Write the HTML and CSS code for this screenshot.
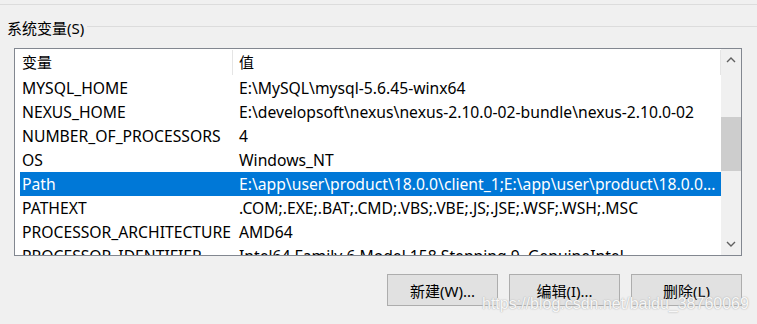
FILE: index.html
```html
<!DOCTYPE html>
<html lang="zh-CN">
<head>
  <meta charset="UTF-8">
  <meta name="viewport" content="width=device-width, initial-scale=1.0">
  <title>系统变量</title>
  <link rel="stylesheet" href="styles.css">
</head>
<body>
  <div class="top-rule"></div>

  <div class="group-title">
    <span class="group-label">系统变量(S)</span>
    <span class="group-line"></span>
  </div>

  <div class="listbox">
    <div class="list">
      <div class="list-header">
        <div class="col-name">变量</div>
        <div class="col-value">值</div>
        <div class="col-end"></div>
      </div>
      <div class="row">
        <div class="col-name">MYSQL_HOME</div>
        <div class="col-value">E:\MySQL\mysql-5.6.45-winx64</div>
      </div>
      <div class="row">
        <div class="col-name">NEXUS_HOME</div>
        <div class="col-value">E:\developsoft\nexus\nexus-2.10.0-02-bundle\nexus-2.10.0-02</div>
      </div>
      <div class="row">
        <div class="col-name">NUMBER_OF_PROCESSORS</div>
        <div class="col-value">4</div>
      </div>
      <div class="row">
        <div class="col-name">OS</div>
        <div class="col-value">Windows_NT</div>
      </div>
      <div class="row selected">
        <div class="col-name">Path</div>
        <div class="col-value">E:\app\user\product\18.0.0\client_1;E:\app\user\product\18.0.0...</div>
      </div>
      <div class="row">
        <div class="col-name">PATHEXT</div>
        <div class="col-value">.COM;.EXE;.BAT;.CMD;.VBS;.VBE;.JS;.JSE;.WSF;.WSH;.MSC</div>
      </div>
      <div class="row">
        <div class="col-name">PROCESSOR_ARCHITECTURE</div>
        <div class="col-value">AMD64</div>
      </div>
      <div class="row">
        <div class="col-name">PROCESSOR_IDENTIFIER</div>
        <div class="col-value">Intel64 Family 6 Model 158 Stepping 9, GenuineIntel</div>
      </div>
    </div>

    <div class="scrollbar">
      <div class="scroll-arrow">
        <svg width="10" height="6" viewBox="0 0 10 6"><path d="M1 5 L5 1 L9 5" fill="none" stroke="#606060" stroke-width="1.4"/></svg>
      </div>
      <div class="scroll-track">
        <div class="scroll-thumb"></div>
      </div>
      <div class="scroll-arrow">
        <svg width="10" height="6" viewBox="0 0 10 6"><path d="M1 1 L5 5 L9 1" fill="none" stroke="#606060" stroke-width="1.4"/></svg>
      </div>
    </div>
  </div>

  <div class="buttons">
    <button class="btn">新建(W)...</button>
    <button class="btn">编辑(I)...</button>
    <button class="btn">删除(L)</button>
  </div>

  <div class="watermark">https://blog.csdn.net/baidu_38760069</div>
</body>
</html>
```

FILE: styles.css
```css
* {
  box-sizing: border-box;
  margin: 0;
  padding: 0;
}

body {
  position: relative;
  width: 757px;
  height: 324px;
  overflow: hidden;
  background-color: #f0f0f0;
  font-family: "Noto Sans", "Noto Sans CJK SC", sans-serif;
  font-size: 15px;
  color: #000;
}

.top-rule {
  margin-top: 4px;
  height: 1px;
  background-color: #dcdcdc;
}

.group-title {
  display: flex;
  align-items: center;
  height: 30px;
  margin-top: 8px;
  padding-left: 7px;
}

.group-label {
  line-height: 20px;
}

.group-line {
  flex: 1;
  height: 1px;
  margin-left: 3px;
  margin-top: -4px;
  background-color: #dcdcdc;
}

.listbox {
  display: flex;
  width: 728px;
  height: 208px;
  margin-top: 5px;
  margin-left: 14px;
  border: 1px solid #828790;
  background-color: #fff;
}

.list {
  flex: 1;
  overflow: hidden;
  padding-left: 5px;
}

.list-header,
.row {
  display: flex;
  align-items: center;
  white-space: nowrap;
}

.list-header {
  height: 27px;
}

.row {
  height: 24px;
  font-size: 15.7px;
}

.col-name {
  width: 213px;
  flex-shrink: 0;
  padding-left: 2px;
}

.col-value {
  flex: 1;
  padding-left: 6px;
  overflow: hidden;
}

.list-header .col-name {
  height: 25px;
  line-height: 25px;
  border-right: 1px solid #e5e5e5;
}

.list-header .col-value {
  height: 25px;
  line-height: 25px;
}

.col-end {
  width: 1px;
  height: 25px;
  background-color: #e5e5e5;
}

.row.selected {
  background-color: #0078d7;
  color: #fff;
}

.scrollbar {
  display: flex;
  flex-direction: column;
  width: 20px;
  background-color: #f0f0f0;
}

.scroll-arrow {
  height: 22px;
  display: flex;
  justify-content: center;
  align-items: center;
}

.scroll-track {
  flex: 1;
  padding-top: 46px;
}

.scroll-thumb {
  height: 54px;
  background-color: #cdcdcd;
}

.buttons {
  display: flex;
  justify-content: flex-end;
  gap: 11px;
  margin-top: 18px;
  padding-right: 15px;
}

.btn {
  width: 111px;
  height: 32px;
  background-color: #e1e1e1;
  border: 1px solid #adadad;
  font-family: "Noto Sans", "Noto Sans CJK SC", sans-serif;
  font-size: 15px;
  color: #000;
}

.watermark {
  position: absolute;
  left: 482px;
  top: 295px;
  font-family: "Liberation Sans", Arial, sans-serif;
  font-size: 16px;
  color: rgba(255, 255, 255, 0.92);
  text-shadow: 0 0 1px #a8a8a8, 0 0 2px #c8c8c8;
}
```
